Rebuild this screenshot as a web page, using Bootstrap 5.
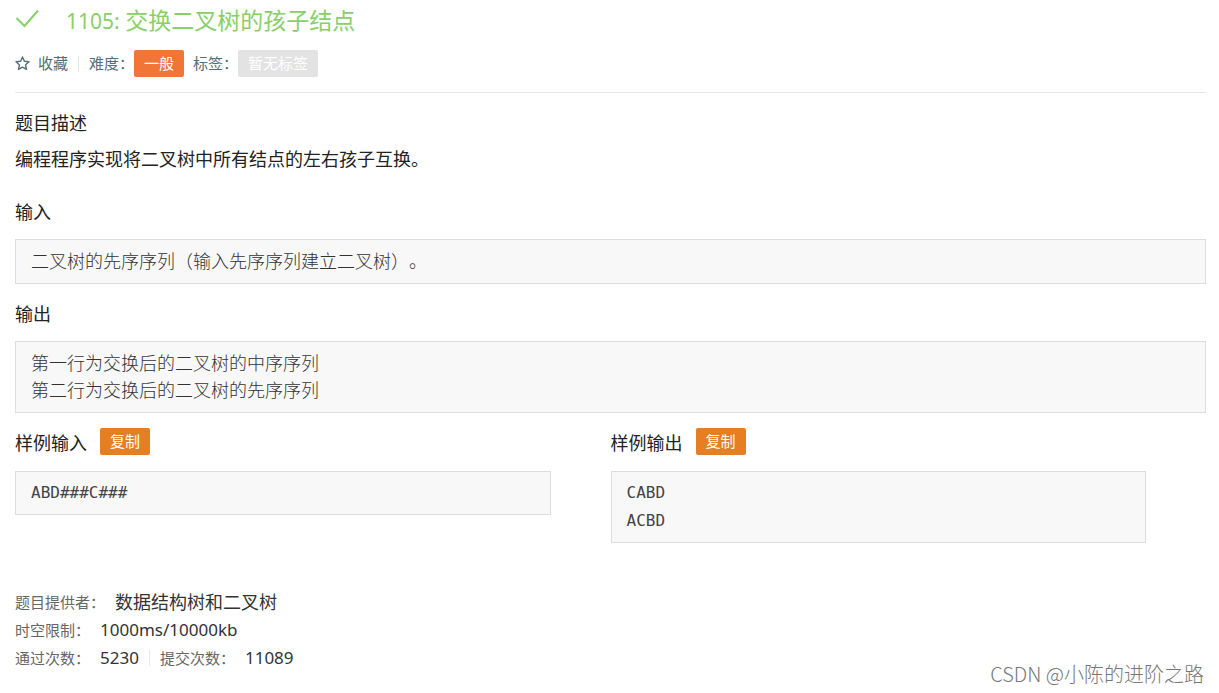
<!DOCTYPE html>
<html lang="zh-CN">
<head>
<meta charset="utf-8">
<meta name="viewport" content="width=device-width, initial-scale=1">
<title>1105: 交换二叉树的孩子结点</title>
<link href="https://cdn.jsdelivr.net/npm/bootstrap@5.3.0/dist/css/bootstrap.min.css" rel="stylesheet">
<style>
  body { font-family: "Noto Sans", "Noto Sans CJK SC", sans-serif; font-size: 18px; line-height: 28px; color: #222; background: #fff; }
  .problem { padding: 0 13px 0 15px; }
  .title-row { height: 40px; color: #87d068; }
  .title-row svg { margin-right: 27px; }
  .title-row h1 { font-size: 23px; line-height: 40px; font-weight: 400; }
  .title-row .num { font-size: 21px; }
  .meta { margin-top: 10px; padding-bottom: 15px; border-bottom: 1px solid #e6e6e6; font-size: 15px; line-height: 27px; color: #546e7a; }
  .fav { color: inherit; font-size: 15px; line-height: 27px; }
  .rule { width: 1px; height: 16px; background: #e8e8e8; margin: 0 10px; }
  .chip, .btn.chip { font-size: 15px; line-height: 27px; height: 27px; padding: 0 10px; border: 0; border-radius: 2px; color: #fff; }
  .level { background: #f07537; margin-right: 9px; }
  .no-tag { background: #e3e3e3; }
  .btn.copy, .btn.copy:hover { background: #e67e22; color: #fff; margin-left: 13px; }
  h2 { font-size: 18px; line-height: 28px; font-weight: 400; margin: 16px 0 13px; }
  .desc { margin: 0 0 25px; }
  .sample-head { height: 30px; margin: 15px 0 13px; }
  .sample-head h2 { line-height: 30px; margin: 0; }
  .block { margin: 0; overflow: visible; border: 1px solid #ddd; background: #f8f8f8; color: #333; padding: 7px 15px 9px; font: 300 18px/27px "Noto Sans CJK SC", sans-serif; font-feature-settings: "chws" 0; font-kerning: none; text-spacing-trim: space-all; white-space: pre-wrap; }
  .block.sample { width: 90%; color: #444; padding: 7px 15px; font: 16px/28px "DejaVu Sans Mono", monospace; }
  .info { margin-top: 45px; color: #333; }
  .info .name { font-size: 15px; color: #666; margin-right: 10px; }
  .info .val { font-size: 17px; }
  .watermark { right: 15px; bottom: 5px; font: 300 20px/28px "Noto Sans CJK SC", sans-serif; color: #777; }
</style>
</head>
<body class="position-relative min-vh-100">
<main class="problem">
  <header>
    <div class="title-row d-flex align-items-center">
      <svg width="24" height="20" viewBox="0 0 24 20" fill="none" stroke="currentColor" stroke-width="2" aria-hidden="true"><path d="M1.500 8 9.500 16 23 0.500"/></svg>
      <h1 class="m-0"><span class="num">1105: </span>交换二叉树的孩子结点</h1>
    </div>
    <div class="meta d-flex align-items-center">
      <button type="button" class="btn fav p-0 border-0 d-flex align-items-center">
        <svg class="me-2" width="15" height="15" viewBox="0 0 15 15" fill="none" stroke="currentColor" stroke-width="1.4" stroke-linejoin="round" aria-hidden="true"><path d="m7.5 1 1.9 4.2 4.6.5-3.4 3.100.900 4.600-4-2.300-4 2.300.900-4.600L1 5.700l4.600-.5z"/></svg>收藏</button>
      <span class="rule"></span>
      <span>难度：</span><span class="chip level">一般</span>
      <span>标签：</span><span class="chip no-tag">暂无标签</span>
    </div>
  </header>

  <section>
    <h2 class="mb-2">题目描述</h2>
    <p class="desc">编程程序实现将二叉树中所有结点的左右孩子互换。</p>
    <h2>输入</h2>
    <pre class="block">二叉树的先序序列（输入先序序列建立二叉树）。</pre>
    <h2>输出</h2>
    <pre class="block">第一行为交换后的二叉树的中序序列
第二行为交换后的二叉树的先序序列</pre>
  </section>

  <section class="row g-0">
    <div class="col-6">
      <div class="sample-head d-flex align-items-start"><h2>样例输入</h2><button type="button" class="btn chip copy">复制</button></div>
      <pre class="block sample">ABD###C###</pre>
    </div>
    <div class="col-6">
      <div class="sample-head d-flex align-items-start"><h2>样例输出</h2><button type="button" class="btn chip copy">复制</button></div>
      <pre class="block sample">CABD
ACBD</pre>
    </div>
  </section>

  <footer class="info">
    <div class="d-flex align-items-center"><span class="name">题目提供者：</span><span>数据结构树和二叉树</span></div>
    <div class="d-flex align-items-center"><span class="name">时空限制：</span><span class="val">1000ms/10000kb</span></div>
    <div class="d-flex align-items-center"><span class="name">通过次数：</span><span class="val">5230</span><span class="rule"></span><span class="name">提交次数：</span><span class="val">11089</span></div>
  </footer>
</main>
<div class="watermark position-absolute">CSDN @小陈的进阶之路</div>
<script src="https://cdn.jsdelivr.net/npm/bootstrap@5.3.0/dist/js/bootstrap.bundle.min.js"></script>
</body>
</html>
